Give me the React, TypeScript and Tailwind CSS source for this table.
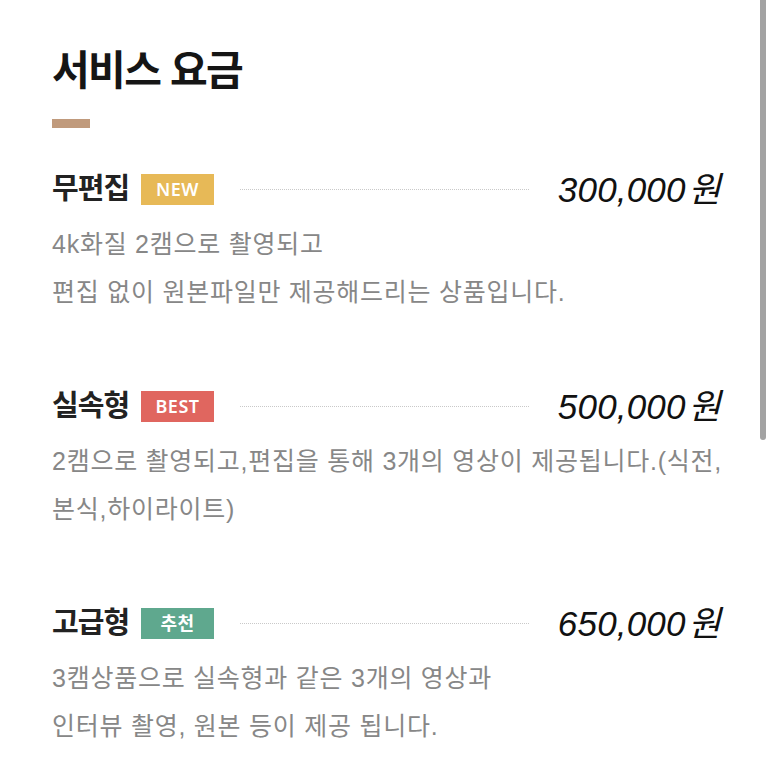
const plans = [
  {
    name: "무편집",
    badge: "NEW",
    badgeClass: "bg-[#e7b957]",
    price: "300,000",
    lines: ["4k화질 2캠으로 촬영되고", "편집 없이 원본파일만 제공해드리는 상품입니다."],
  },
  {
    name: "실속형",
    badge: "BEST",
    badgeClass: "bg-[#e0665f]",
    price: "500,000",
    lines: ["2캠으로 촬영되고,편집을 통해 3개의 영상이 제공됩니다.(식전,", "본식,하이라이트)"],
  },
  {
    name: "고급형",
    badge: "추천",
    badgeClass: "bg-[#5fa88e]",
    price: "650,000",
    lines: ["3캠상품으로 실속형과 같은 3개의 영상과", "인터뷰 촬영, 원본 등이 제공 됩니다."],
  },
];

function PlanItem({ plan }: { plan: (typeof plans)[number] }) {
  return (
    <div>
      <div className="flex h-[31px] items-center">
        <h3 className="w-[89px] shrink-0 text-[29px] font-bold leading-none tracking-[-0.03em] text-[#222]">
          {plan.name}
        </h3>
        <span
          className={`flex h-[31px] w-[73px] shrink-0 items-center justify-center font-['Noto_Sans','Noto_Sans_CJK_KR',sans-serif] text-[18px] font-semibold tracking-[0.03em] text-white ${plan.badgeClass}`}
        >
          {plan.badge}
        </span>
        <span className="ml-[26px] mr-[29px] h-0 flex-1 border-t border-dotted border-[#c9c9c9]" />
        <p className="shrink-0 text-[35px] italic leading-none tracking-[0.005em] text-[#111]">
          {plan.price}
          <span className="ml-[3px]">원</span>
        </p>
      </div>
      <p className="mt-[15px] text-[25px] leading-[48px] tracking-[0.03em] text-[#878787]">
        {plan.lines.map((line, i) => (
          <span key={i} className="block whitespace-nowrap">
            {line}
          </span>
        ))}
      </p>
    </div>
  );
}

export default function App() {
  return (
    <div className="relative min-h-[773px] overflow-hidden bg-white font-['Liberation_Sans','Noto_Sans_CJK_KR',sans-serif]">
      <div className="px-[52px] pt-[48px]">
        <h2 className="text-[41px] font-bold leading-[46px] tracking-[-0.04em] text-[#151515]">
          서비스 요금
        </h2>
        <div className="mt-[25px] h-[9px] w-[38px] bg-[#c09a7c]" />
        <div className="flex flex-col gap-[75px] pt-[46px]">
          {plans.map((plan) => (
            <PlanItem key={plan.name} plan={plan} />
          ))}
        </div>
      </div>
      <div className="absolute right-[7px] top-0 h-[440px] w-[6px] rounded-b-full bg-[#a3a3a3]" />
    </div>
  );
}
